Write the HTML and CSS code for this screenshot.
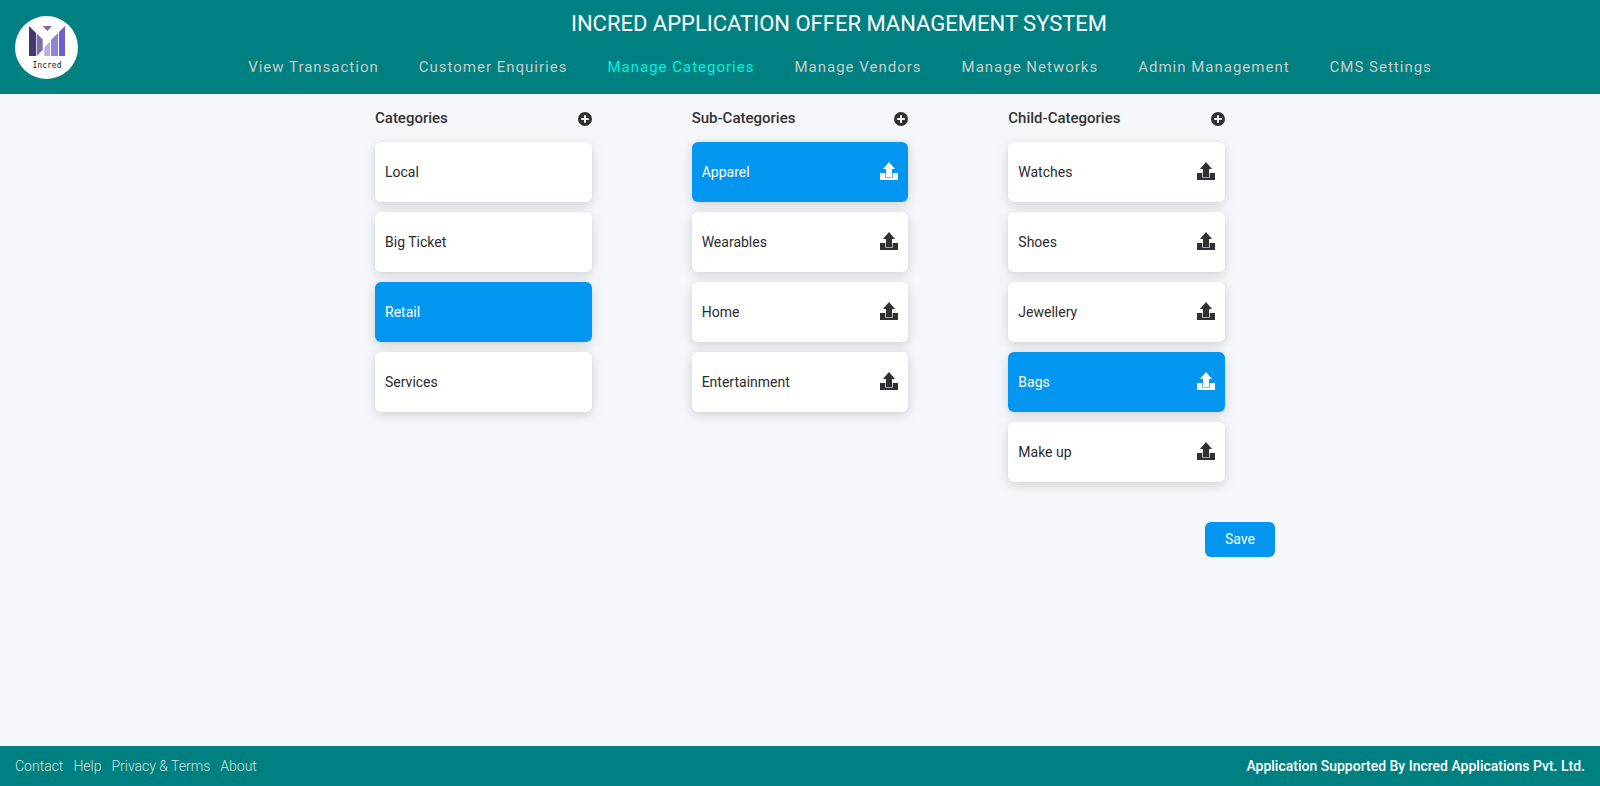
FILE: index.html

```html
<!DOCTYPE html>
<html>
<head>
  <meta charset="utf-8">
  <title>Manage Categories</title>
  <link rel="stylesheet" href="styles.css">
</head>
<body>
  <!-- icons used by the columns -->
  <svg class="sprite" width="0" height="0">
    <symbol id="upload" viewBox="0 0 18 18">
      <path d="M9 0 15 7H12V15.2H6V7H3Z"/>
      <path d="M0 11H5.3V15.8H12.7V11H18V18H0Z"/>
      <rect class="notch" x="12.2" y="16.6" width="2.2" height="0.8"/>
      <rect class="notch" x="15" y="16.6" width="1.2" height="0.8"/>
    </symbol>
    <symbol id="plus" viewBox="0 0 14 14">
      <path fill-rule="evenodd" d="M7 0a7 7 0 1 1 0 14A7 7 0 0 1 7 0ZM6 3.2V6H3.2V8H6V10.8H8V8H10.8V6H8V3.2Z"/>
    </symbol>
  </svg>

  <header class="topbar">
    <div class="logo">
      <svg width="37" height="30" viewBox="0 0 37 30">
        <path fill="#46376f" d="M0 0 7 7V30H0Z"/>
        <path fill="#7a70a8" d="M7.7 7.5 13.7 13.5V24L7.7 30Z"/>
        <path fill="#b4aee4" d="M15.3 21.5 21 15.5V30H15.3Z"/>
        <path fill="#8b84d8" d="M22 14 29 7V30H22Z"/>
        <path fill="#6a60d0" d="M30 6 36 0V30H30Z"/>
        <path fill="#7a68b0" d="M13.7 0H23L18.4 5Z"/>
      </svg>
      <span class="logo-text">Incred</span>
    </div>
    <div class="topbar-main">
      <h1 class="app-title">INCRED APPLICATION OFFER MANAGEMENT SYSTEM</h1>
      <nav class="main-nav">
        <a href="#">View Transaction</a>
        <a href="#">Customer Enquiries</a>
        <a href="#" class="active">Manage Categories</a>
        <a href="#">Manage Vendors</a>
        <a href="#">Manage Networks</a>
        <a href="#">Admin Management</a>
        <a href="#">CMS Settings</a>
      </nav>
    </div>
  </header>

  <main class="content">
    <div class="columns">
      <section class="column">
        <div class="column-head">
          <h2>Categories</h2>
          <svg class="plus"><use href="#plus"/></svg>
        </div>
        <div class="card"><span>Local</span></div>
        <div class="card"><span>Big Ticket</span></div>
        <div class="card selected"><span>Retail</span></div>
        <div class="card"><span>Services</span></div>
      </section>

      <section class="column">
        <div class="column-head">
          <h2>Sub-Categories</h2>
          <svg class="plus"><use href="#plus"/></svg>
        </div>
        <div class="card selected"><span>Apparel</span><svg class="upload"><use href="#upload"/></svg></div>
        <div class="card"><span>Wearables</span><svg class="upload"><use href="#upload"/></svg></div>
        <div class="card"><span>Home</span><svg class="upload"><use href="#upload"/></svg></div>
        <div class="card"><span>Entertainment</span><svg class="upload"><use href="#upload"/></svg></div>
      </section>

      <section class="column">
        <div class="column-head">
          <h2>Child-Categories</h2>
          <svg class="plus"><use href="#plus"/></svg>
        </div>
        <div class="card"><span>Watches</span><svg class="upload"><use href="#upload"/></svg></div>
        <div class="card"><span>Shoes</span><svg class="upload"><use href="#upload"/></svg></div>
        <div class="card"><span>Jewellery</span><svg class="upload"><use href="#upload"/></svg></div>
        <div class="card selected"><span>Bags</span><svg class="upload"><use href="#upload"/></svg></div>
        <div class="card"><span>Make up</span><svg class="upload"><use href="#upload"/></svg></div>
      </section>
    </div>
    <div class="actions">
      <button class="save-btn" type="button">Save</button>
    </div>
  </main>

  <footer class="footer">
    <div class="footer-links">
      <a href="#">Contact</a>
      <a href="#">Help</a>
      <a href="#">Privacy &amp; Terms</a>
      <a href="#">About</a>
    </div>
    <div class="footer-note">Application Supported By Incred Applications Pvt. Ltd.</div>
  </footer>
</body>
</html>
```

FILE: styles.css

```css
* {
  margin: 0;
  box-sizing: border-box;
}

html, body {
  height: 100%;
}

body {
  display: flex;
  flex-direction: column;
  font-family: Roboto, "Liberation Sans", sans-serif;
  font-size: 14px;
  color: #2b2b2b;
  background-color: #f5f7fb;
}

.sprite {
  display: block;
  height: 0;
}

.topbar {
  display: flex;
  height: 94px;
  padding: 16px 0 0 15px;
  background-color: #008080;
}

.logo {
  display: flex;
  flex-direction: column;
  align-items: center;
  width: 63px;
  height: 63px;
  padding: 10px 0 0 1px;
  border-radius: 50%;
  background-color: #fff;
}

.logo-text {
  margin-top: 5px;
  font-family: "DejaVu Sans Mono", monospace;
  font-size: 8px;
  line-height: 9px;
  color: #222;
}

.topbar-main {
  flex: 1;
  margin-top: -16px;
  text-align: center;
}

.app-title {
  padding-top: 10px;
  font-size: 22px;
  font-weight: 400;
  line-height: 28px;
  color: #fff;
}

.main-nav {
  display: flex;
  justify-content: center;
  gap: 40px;
  margin-top: 19px;
  padding-left: 2px;
}

.main-nav a {
  font-size: 15px;
  line-height: 20px;
  letter-spacing: 1px;
  color: #c8cccb;
  text-decoration: none;
}

.main-nav a.active {
  color: #00f0e0;
}

.content {
  flex: 1;
  padding: 14px 325px 0 375px;
}

.columns {
  display: flex;
  align-items: flex-start;
  gap: 100px;
}

.column {
  width: 216.67px;
}

.column-head {
  display: flex;
  align-items: center;
  justify-content: space-between;
  height: 20px;
  margin-bottom: 14px;
}

.column-head h2 {
  font-size: 15px;
  font-weight: 500;
  color: #333;
}

.plus {
  width: 14px;
  height: 14px;
  margin-top: 2px;
  fill: #2f3033;
}

.card {
  display: flex;
  align-items: center;
  justify-content: space-between;
  height: 60px;
  margin-bottom: 10px;
  padding: 0 10px;
  border-radius: 6px;
  background-color: #fff;
  box-shadow: 0 3px 12px rgba(0, 0, 0, 0.16);
}

.card.selected {
  color: #fff;
  background-color: #0396f0;
}

.upload {
  width: 18px;
  height: 18px;
  margin-top: -3px;
  fill: #2f3033;
}

.upload .notch {
  fill: #fff;
}

.card.selected .upload {
  fill: #fff;
}

.card.selected .upload .notch {
  fill: #0396f0;
}

.actions {
  display: flex;
  justify-content: flex-end;
  margin-top: 30px;
}

.save-btn {
  width: 70px;
  height: 35px;
  padding-bottom: 2px;
  border: 0;
  border-radius: 6px;
  font-family: inherit;
  font-size: 14px;
  color: #fff;
  background-color: #0396f0;
}

.footer {
  display: flex;
  align-items: center;
  justify-content: space-between;
  height: 40px;
  padding: 0 15px;
  background-color: #008080;
}

.footer-links {
  display: flex;
  gap: 10px;
}

.footer-links a {
  font-size: 14px;
  font-weight: 300;
  color: #d8e0df;
  text-decoration: none;
}

.footer-note {
  font-size: 14px;
  font-weight: 500;
  color: #fff;
}
```
